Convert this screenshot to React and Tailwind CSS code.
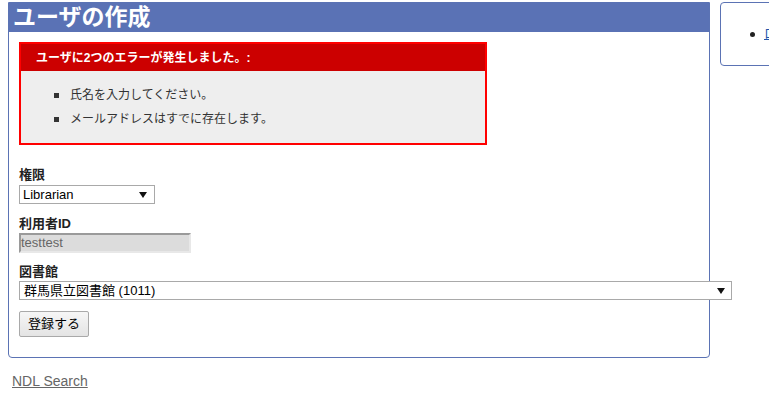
// ユーザの作成 — new user form with validation errors
const FONT = { fontFamily: '"Liberation Sans", Arial, "Noto Sans CJK JP", sans-serif' };

const ERRORS = ['氏名を入力してください。', 'メールアドレスはすでに存在します。'];

const Caret = () => (
  <svg width="8" height="6" viewBox="0 0 8 6" className="shrink-0">
    <path d="M0 0h8L4 6z" fill="#111" />
  </svg>
);

export default function App() {
  return (
    <div className="w-[769px] h-[411px] overflow-hidden bg-white text-[13px] text-[#333]" style={FONT}>
      <div className="flex items-start pt-[2px] pl-[8px] gap-[10px]">
        {/* Main panel */}
        <div className="w-[702px] shrink-0 border border-[#5b73b4] rounded-b-[4px]">
          <div className="h-[29px] bg-[#5a72b5] flex items-center pl-[4px]">
            <h1 className="text-[23px] font-bold text-white leading-none">ユーザの作成</h1>
          </div>

          <div className="px-[10px] pt-[10px] pb-[20px]">
            {/* Error box */}
            <div className="w-[468px] border-2 border-[#ff0000] bg-[#eeeeee]">
              <div className="h-[27px] bg-[#cc0000] flex items-center pl-[15px] text-white font-bold text-[12px]">
                ユーザに2つのエラーが発生しました。:
              </div>
              <ul className="pl-[33px] pt-[15px] pb-[15px] flex flex-col gap-[6px] text-[12px]">
                {ERRORS.map((e) => (
                  <li key={e} className="flex items-center gap-[11px] h-[18px]">
                    <span className="w-[5px] h-[5px] bg-[#333]" />
                    <span>{e}</span>
                  </li>
                ))}
              </ul>
            </div>

            {/* Form */}
            <div className="mt-[22px] flex flex-col">
              <label className="font-bold text-[13px] text-[#222] leading-[16px]">権限</label>
              <div className="mt-[2px] w-[136px] h-[19px] border border-[#a9a9a9] bg-white flex items-center justify-between pl-[3px] pr-[7px] text-[13px] text-black">
                <span>Librarian</span>
                <Caret />
              </div>

              <label className="mt-[12px] font-bold text-[13px] text-[#222] leading-[16px]">利用者ID</label>
              <div className="mt-[1px] w-[172px] h-[20px] border-t-2 border-l-2 border-[#9a9a9a] border-r-2 border-b-2 border-r-[#e8e8e8] border-b-[#e8e8e8] bg-[#dcdcdc] flex items-center text-[13px] text-[#666]">
                testtest
              </div>

              <label className="mt-[11px] font-bold text-[13px] text-[#222] leading-[16px]">図書館</label>
              <div className="mt-[1px] w-[713px] h-[19px] border border-[#a9a9a9] bg-white flex items-center justify-between pl-[4px] pr-[6px] text-[13px] text-black">
                <span>群馬県立図書館 (1011)</span>
                <Caret />
              </div>

              <div className="mt-[11px]">
                <button className="h-[26px] px-[8px] border border-[#a9a9a9] rounded-[2px] bg-gradient-to-b from-[#f6f6f6] to-[#e4e4e4] text-[13px] text-black">
                  登録する
                </button>
              </div>
            </div>
          </div>
        </div>

        {/* Side box */}
        <div className="w-[200px] h-[64px] shrink-0 border border-[#5b73b4] rounded-[4px] flex items-center pl-[29px]">
          <span className="w-[5px] h-[5px] rounded-full bg-[#222] mr-[9px]" />
          <a className="text-[#2255aa] underline">ログアウト</a>
        </div>
      </div>

      <div className="mt-[13px] pl-[12px]">
        <a className="text-[#666] underline text-[14px]">NDL Search</a>
      </div>
    </div>
  );
}
